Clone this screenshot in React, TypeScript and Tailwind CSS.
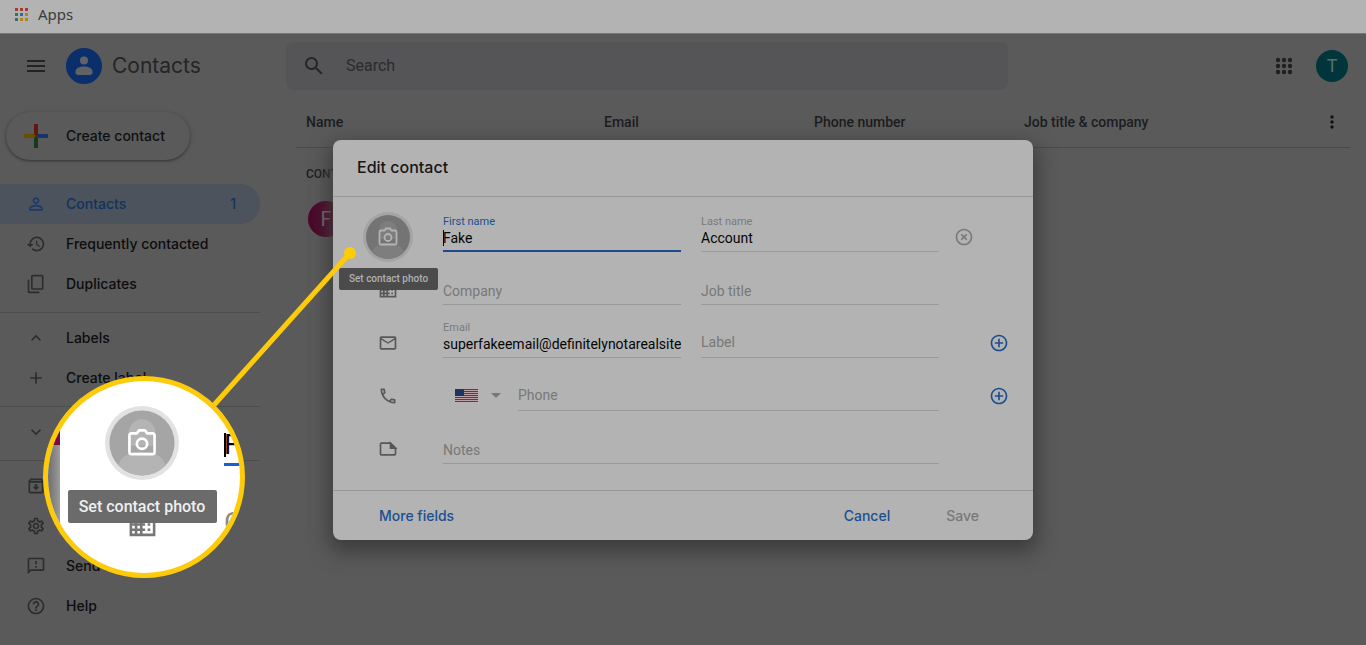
import { useId, type ReactNode } from "react";
import {
  MdAdd,
  MdAddCircleOutline,
  MdArrowDropDown,
  MdBusiness,
  MdContentCopy,
  MdExpandLess,
  MdExpandMore,
  MdHelpOutline,
  MdHighlightOff,
  MdHistory,
  MdMailOutline,
  MdMenu,
  MdMoreVert,
  MdOutlineArchive,
  MdOutlineFeedback,
  MdOutlinePhone,
  MdOutlineSettings,
  MdPersonOutline,
  MdSearch,
} from "react-icons/md";

const appColors = [
  "bg-[#a8392f]",
  "bg-[#a8392f]",
  "bg-[#a8392f]",
  "bg-[#2f7a45]",
  "bg-[#2f6aa8]",
  "bg-[#ac8a10]",
  "bg-[#2f6a86]",
  "bg-[#ac8a10]",
  "bg-[#ac8a10]",
];

const BookmarksBar = () => (
  <nav className="flex h-[34px] items-center border-b border-[#777777] bg-[#b3b3b3] px-[15px] pb-1">
    <a href="#" className="flex items-center gap-[10px] font-['Noto_Sans',sans-serif] text-[15px] text-[#3a3c3f]">
      <span className="grid grid-cols-3 gap-[2px]">
        {appColors.map((color, i) => (
          <span key={i} className={`size-[3px] ${color}`} />
        ))}
      </span>
      Apps
    </a>
  </nav>
);

const Header = () => (
  <header className="flex h-16 items-center">
    <div className="flex w-[286px] shrink-0 items-center pl-6">
      <button aria-label="Main menu" className="mr-[18px]">
        <MdMenu className="size-6 text-[#222325]" />
      </button>
      <svg viewBox="0 0 36 36" className="mr-[10px] size-9">
        <circle cx="18" cy="18" r="18" fill="#0b2f6b" />
        <circle cx="18" cy="12.5" r="4" fill="#5f6368" />
        <path d="M9.5 23.5c0-3.500 4-5 8.500-5s8.500 1.500 8.500 5v1c0 1.500-1 2.500-2.500 2.500H12c-1.500 0-2.500-1-2.500-2.500z" fill="#5f6368" />
      </svg>
      <span className="text-[21px] text-[#232527]">Contacts</span>
    </div>
    <label className="flex h-12 w-[722px] items-center gap-5 rounded-lg bg-[#555557] px-4">
      <MdSearch className="size-6 text-[#232527]" />
      <input
        aria-label="Search"
        placeholder="Search"
        className="flex-1 font-[Roboto,sans-serif] text-base outline-none placeholder:text-[#292b2d]"
      />
    </label>
    <div className="ml-auto flex items-center gap-5 pr-[18px]">
      <button aria-label="Google apps">
        <svg viewBox="0 0 24 24" className="size-6 fill-[#1f2022]">
          {[6, 12, 18].map((y) => [6, 12, 18].map((x) => <circle key={`${x}-${y}`} cx={x} cy={y} r="2.2" />))}
        </svg>
      </button>
      <button className="size-8 rounded-full bg-[#00363b] font-[Roboto,sans-serif] text-lg text-[#5a6c6e]">T</button>
    </div>
  </header>
);

type NavItemProps = { icon: ReactNode; label: string; count?: number; active?: boolean };

const NavItem = ({ icon, label, count, active }: NavItemProps) => (
  <a
    href="#"
    className={`flex h-10 items-center gap-[18px] rounded-r-full px-6 text-sm font-medium ${
      active ? "bg-[#4c535c] text-[#12325f]" : "text-[#0c0d0e]"
    }`}
  >
    <span className={`flex w-6 justify-center text-xl ${active ? "text-[#173a70]" : "text-[#2b2d2f]"}`}>{icon}</span>
    <span className="flex-1">{label}</span>
    {count && <span>{count}</span>}
  </a>
);

const Sidebar = () => (
  <aside className="w-[260px] shrink-0 pt-[14px]">
    <button className="ml-[6px] flex h-12 w-[184px] items-center gap-[18px] rounded-full pl-[18px] text-sm font-medium text-[#0f1011] shadow-[0_1px_2px_0_#3a3a3b,0_1px_3px_1px_#505051]">
      <svg viewBox="0 0 24 24" className="size-6">
        <path d="M10 0h4v12h-4z" fill="#631713" />
        <path d="M10 12h4v12h-4z" fill="#123c1d" />
        <path d="M14 10h10v4H12z" fill="#16336c" />
        <path d="M0 10h10l2 2-2 2H0z" fill="#665000" />
      </svg>
      Create contact
    </button>
    <nav className="pt-6">
      <NavItem icon={<MdPersonOutline />} label="Contacts" count={1} active />
      <NavItem icon={<MdHistory />} label="Frequently contacted" />
      <NavItem icon={<MdContentCopy className="-scale-y-100" />} label="Duplicates" />
      <hr className="mt-2 mb-[5px] border-[#4d4d4e]" />
      <NavItem icon={<MdExpandLess />} label="Labels" />
      <NavItem icon={<MdAdd />} label="Create label" />
      <hr className="mt-2 mb-[5px] border-[#4d4d4e]" />
      <NavItem icon={<MdExpandMore />} label="Other contacts" />
      <hr className="mt-2 mb-[5px] border-[#4d4d4e]" />
      <NavItem icon={<MdOutlineArchive />} label="Import" />
      <NavItem icon={<MdOutlineSettings />} label="Settings" />
      <NavItem icon={<MdOutlineFeedback />} label="Send feedback" />
      <NavItem icon={<MdHelpOutline />} label="Help" />
    </nav>
  </aside>
);

const ContactList = () => (
  <main className="ml-9 flex-1 pr-4 font-[Roboto,sans-serif]">
    <table className="w-full table-fixed text-left">
      <thead>
        <tr className="h-[49px] border-b border-[#4a4a4b] text-sm text-[#1c1d1f]">
          <th className="w-[308px] pl-[10px] font-medium">Name</th>
          <th className="w-[210px] font-medium">Email</th>
          <th className="w-[210px] font-medium">Phone number</th>
          <th className="font-medium">Job title &amp; company</th>
          <th className="w-7">
            <button aria-label="List settings" className="block">
              <MdMoreVert className="size-5 text-[#111213]" />
            </button>
          </th>
        </tr>
      </thead>
      <tbody>
        <tr className="h-[54px] text-xs text-[#1c1d1f]">
          <td colSpan={5} className="pl-[10px] font-medium">
            CONTACTS
          </td>
        </tr>
        <tr>
          <td colSpan={5} className="pl-3">
            <span className="flex size-9 items-center justify-center rounded-full bg-[#4b0729] text-xl text-[#806872]">
              F
            </span>
          </td>
        </tr>
      </tbody>
    </table>
  </main>
);

const CameraAvatar = ({ className, light }: { className: string; light?: boolean }) => (
  <svg viewBox="0 0 50 50" className={className}>
    <circle cx="25" cy="25" r="25" fill={light ? "#e2e2e2" : "#a4a4a4"} />
    <circle cx="25" cy="25" r="22" fill={light ? "#a5a5a5" : "#747474"} />
    <path
      d="M16 18a9 9 0 0 1 18 0v9H16zM9 40c2-7 9-9 16-9s14 2 16 9a22 22 0 0 1-32 0z"
      fill={light ? "#b4b4b4" : "#7e7e7e"}
    />
    <g fill="none" stroke={light ? "#ffffff" : "#b3b3b3"} strokeWidth="1.8">
      <path d="M18 18.5h3.500l1.500-2h4l1.500 2H32a1.500 1.500 0 0 1 1.500 1.500v11a1.500 1.500 0 0 1-1.500 1.500H18a1.500 1.500 0 0 1-1.500-1.500V20a1.500 1.500 0 0 1 1.500-1.500z" />
      <circle cx="25" cy="25.5" r="3.5" />
    </g>
  </svg>
);

const NoteIcon = () => (
  <svg viewBox="0 0 24 24" className="size-5" fill="none" stroke="currentColor" strokeWidth="2">
    <path d="M4 5h11l6 6v7a1 1 0 0 1-1 1H4a1 1 0 0 1-1-1V6a1 1 0 0 1 1-1z" />
    <path d="M15 5v6h6z" fill="currentColor" />
  </svg>
);

const FlagIcon = () => (
  <svg viewBox="0 0 23 13" className="h-[13px] w-[23px]">
    <path d="M0 0h23v13H0z" fill="#b8a0a4" />
    <path d="M0 .5h23M0 2.500h23M0 4.500h23M0 6.500h23M0 8.500h23M0 10.500h23M0 12.500h23" stroke="#922535" />
    <path d="M0 0h9v7H0z" fill="#1d3360" />
  </svg>
);

type FieldProps = { label: string; value?: string; focused?: boolean; roomy?: boolean; className?: string };

const Field = ({ label, value, focused, roomy, className = "" }: FieldProps) => {
  const id = useId();
  return (
    <div className={className}>
      {value && (
        <label
          htmlFor={id}
          className={`block text-[11px] leading-3 ${focused ? "text-[#1c4f91]" : "text-[#7a7b7c]"}`}
        >
          {label}
        </label>
      )}
      <div
        className={`relative ${roomy ? "h-[26px]" : "h-6"} ${
          focused ? "border-b-2 border-[#1c4a8a]" : "border-b border-[#999999]"
        }`}
      >
        {focused && <span className="absolute top-[2px] left-0 h-4 w-px bg-black" />}
        <input
          id={id}
          aria-label={value ? undefined : label}
          defaultValue={value}
          placeholder={label}
          className="block h-5 w-full text-sm text-[#050505] outline-none placeholder:text-[#77787a]"
        />
      </div>
    </div>
  );
};

const AddButton = ({ label }: { label: string }) => (
  <button type="button" aria-label={label} className="mb-[5px] justify-self-end">
    <MdAddCircleOutline className="size-5 text-[#1c4f91]" />
  </button>
);

const EditDialog = () => (
  <form
    role="dialog"
    aria-label="Edit contact"
    className="w-[700px] rounded-lg bg-[#b3b3b3] font-[Roboto,sans-serif] shadow-[0_8px_20px_4px_#3c3c3c]"
  >
    <h2 className="flex h-[57px] items-center border-b border-[#979797] px-6 pb-[2px] font-[Inter,sans-serif] text-base font-medium text-[#151617]">
      Edit contact
    </h2>
    <div className="grid auto-rows-[53px] grid-cols-[80px_238px_20px_238px_1fr] items-end pt-[2px] pr-6 pb-[26px] pl-[30px] text-[#56585a]">
      <div className="relative -mb-[10px]">
        <button type="button" aria-label="Set contact photo" className="block">
          <CameraAvatar className="size-[50px]" />
        </button>
        <span
          role="tooltip"
          className="absolute top-14 -left-6 z-10 w-[99px] rounded-xs bg-[#4b4b4b] py-1 text-center text-[10px] leading-[14px] font-medium whitespace-nowrap text-[#b0b0b0]"
        >
          Set contact photo
        </span>
      </div>
      <Field label="First name" value="Fake" focused />
      <Field label="Last name" value="Account" className="col-start-4" />
      <button type="button" aria-label="Remove" className="mb-[5px] pl-[15px]">
        <MdHighlightOff className="size-5 text-[#7a7a7a]" />
      </button>

      <MdBusiness className="col-start-1 mb-[5px] ml-[15px] size-5" />
      <Field label="Company" />
      <Field label="Job title" className="col-start-4" />

      <MdMailOutline className="col-start-1 mb-[5px] ml-[15px] size-5" />
      <Field label="Email" value="superfakeemail@definitelynotarealsite" />
      <Field label="Label" roomy className="col-start-4" />
      <AddButton label="Add email" />

      <MdOutlinePhone className="col-start-1 mb-[5px] ml-[15px] size-5" />
      <div className="col-span-3 flex items-end">
        <button
          type="button"
          aria-label="Country"
          aria-haspopup="listbox"
          className="mb-1 flex w-[75px] items-center gap-[6px] pl-3"
        >
          <FlagIcon />
          <MdArrowDropDown className="size-6 text-[#77787a]" />
        </button>
        <Field label="Phone" roomy className="flex-1" />
      </div>
      <AddButton label="Add phone" />

      <span className="col-start-1 mb-[5px] ml-[15px]">
        <NoteIcon />
      </span>
      <Field label="Notes" className="col-span-3" />
    </div>
    <footer className="flex h-[50px] items-center border-t border-[#979797] pr-[54px] pl-[46px] font-[Inter,sans-serif] text-sm font-medium">
      <button type="button" className="text-[#1c4f91]">
        More fields
      </button>
      <button type="button" className="ml-auto text-[#1c4f91]">
        Cancel
      </button>
      <button type="submit" className="ml-14 text-[#77787a]">
        Save
      </button>
    </footer>
  </form>
);

// Enlarged view of the photo button, tied to it by the yellow pointer
const Magnifier = () => (
  <div aria-hidden="true" className="pointer-events-none absolute top-0 left-0 z-20 font-[Roboto,sans-serif]">
    <svg viewBox="0 0 360 420" className="h-[420px] w-[360px]">
      <path d="M350 253 214 405" stroke="#fdcb0a" strokeWidth="5" />
      <circle cx="350" cy="253" r="6" fill="#fdcb0a" />
    </svg>
    <div className="absolute top-[376px] left-[43px] flex size-[202px] overflow-hidden rounded-full border-5 border-[#fdcb0a] bg-white">
      <div className="w-3 shrink-0 bg-linear-to-r from-[#6e6e6e] to-[#9c9c9c]">
        <div className="h-16 bg-[#7a0c42]" />
      </div>
      <div className="flex w-[164px] shrink-0 flex-col items-center pt-[25px]">
        <CameraAvatar light className="size-[74px]" />
        <span className="relative z-10 mt-[10px] flex h-[33px] w-[149px] items-center justify-center rounded-xs bg-[#6b6b6b] text-base font-medium text-[#efefef]">
          Set contact photo
        </span>
        <MdBusiness className="-mt-[14px] size-[31px] text-[#777777]" />
      </div>
      <div className="w-12 shrink-0 pt-[46px] text-[28px] leading-9">
        <div className="relative border-b-3 border-[#1a5fd0] text-black">
          <span className="absolute top-[6px] left-0 h-6 w-[2px] bg-black" />F
        </div>
        <div className="pt-[39px] text-[#8a8a8a]">C</div>
      </div>
    </div>
  </div>
);

const App = () => (
  <div className="min-h-screen bg-[#5a5a5a] font-[Inter,sans-serif]">
    <BookmarksBar />
    <Header />
    <div className="flex">
      <Sidebar />
      <ContactList />
    </div>
    <div className="absolute inset-x-0 top-[140px] flex justify-center">
      <EditDialog />
    </div>
    <Magnifier />
  </div>
);

export default App;
